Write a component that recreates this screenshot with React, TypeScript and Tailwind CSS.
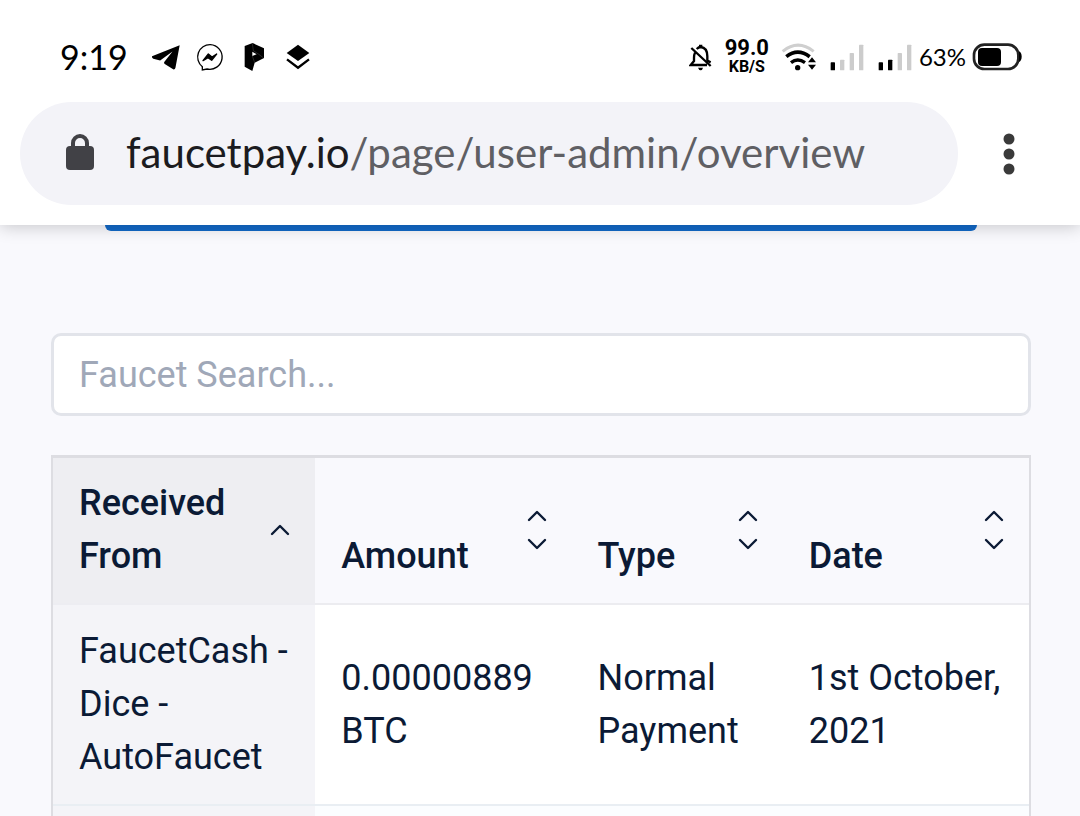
const payments = [
  { from: 'FaucetCash - Dice - AutoFaucet', amount: '0.00000889 BTC', type: 'Normal Payment', date: '1st October, 2021' },
]

// The widths are shares of the row: the table stretches them to fill the page
const columns = [
  { label: 'Received From', width: 'w-[262px]', sorted: true },
  { label: 'Amount', width: 'w-[256px]', sorted: false },
  { label: 'Type', width: 'w-[211px]', sorted: false },
  { label: 'Date', width: 'w-[246px]', sorted: false },
]

function TelegramIcon() {
  return (
    <svg className="h-7 w-7" viewBox="335 54 86 86" aria-hidden="true">
      <path d="M420 61 335 95q-1 5 4 7l21 6 38-28-26 33 1 5 27 17q6 1 7-5z" />
    </svg>
  )
}

function MessengerIcon() {
  return (
    <svg className="h-7 w-7" viewBox="468 54 84 84" aria-hidden="true">
      <path d="M511 59a37 37 0 1 1-10 73l-14 3v-10a37 37 0 0 1 24-66z" fill="none" stroke="black" strokeWidth="4" />
      <path d="m489 107 16-20 11 9 14-9-15 19-11-8z" stroke="black" strokeWidth="4" strokeLinejoin="round" />
    </svg>
  )
}

function PIcon() {
  return (
    <svg className="h-7 w-7" viewBox="601 53 84 84" aria-hidden="true">
      <path fillRule="evenodd" d="m615 62 24-9 34 16v29l-28 14-7 25-23-13zm23 17v13l13-5z" />
      <path d="m638 54 3 22 15 10 16 12M638 92l7 20" fill="none" stroke="#777777" strokeWidth="1" />
    </svg>
  )
}

function LayersIcon() {
  return (
    <svg className="h-7 w-7" viewBox="733 52 84 84" aria-hidden="true">
      <path d="m775 57 34 25-34 24-34-24z" />
      <path d="m742 101 33 25 33-25" fill="none" stroke="black" strokeWidth="7" />
    </svg>
  )
}

function BellOffIcon() {
  return (
    <svg className="h-7 w-6" viewBox="56 54 72 84" aria-hidden="true">
      <g fill="none" stroke="black" strokeWidth="7">
        <path d="m63 69 58 54M74 83q-3 6-3 15v10l-10 12h49" />
        <path d="M79 72q6-6 12-6 20 2 20 28v13l10 5" />
      </g>
      <path d="M86 59h10v8H86zM83 128h15q-2 8-7 8t-8-8z" />
    </svg>
  )
}

function WifiIcon() {
  return (
    <svg className="h-7 w-9" viewBox="334 52 108 84" aria-hidden="true">
      <g fill="none">
        <path d="M339 77q46-37 93 0" stroke="#cfcfcf" strokeWidth="9" />
        <path d="M350 93q34-27 70 0" stroke="black" strokeWidth="11" />
        <path d="M364 111q20-16 42 0" stroke="black" strokeWidth="10" />
      </g>
      <circle cx="384" cy="126" r="8" />
      <path d="m415 110 12-15 12 15zM415 117h24l-12 15z" />
    </svg>
  )
}

function SignalIcon({ level }: { level: number }) {
  const bars = [
    { x: 0, y: 54 },
    { x: 28, y: 46 },
    { x: 57, y: 26 },
    { x: 85, y: 1 },
  ]
  return (
    <svg className="h-7 w-9" viewBox="-5 -4 108 84" aria-hidden="true">
      {bars.map((bar, i) => (
        <rect key={bar.x} x={bar.x} y={bar.y} width="13" height={78 - bar.y} rx="2" fill={i < level ? 'black' : '#cccccc'} />
      ))}
    </svg>
  )
}

function BatteryIcon() {
  return (
    <svg className="h-7 w-[50px]" viewBox="906 51 150 84" aria-hidden="true">
      <rect x="912" y="56" width="133" height="73" rx="31" fill="none" stroke="#222222" strokeWidth="8" />
      <rect x="924" y="66" width="69" height="54" rx="12" />
      <path d="M1047 76q8 4 8 16t-8 16z" />
    </svg>
  )
}

function StatusBar() {
  return (
    <div className="flex h-[102px] items-center justify-between pt-3 pr-[58px] pl-[60px]">
      <div className="flex items-center gap-6">
        <span className="font-[Lato,sans-serif] text-[34px] leading-10">9:19</span>
        <div className="flex items-center gap-4">
          <TelegramIcon />
          <MessengerIcon />
          <PIcon />
          <LayersIcon />
        </div>
      </div>
      <div className="flex items-center gap-3">
        <BellOffIcon />
        <div className="text-center font-bold">
          <div className="text-[22px] leading-5">99.0</div>
          <div className="text-base leading-[18px]">KB/S</div>
        </div>
        <WifiIcon />
        <SignalIcon level={1} />
        <div className="flex items-center gap-1.5">
          <SignalIcon level={2} />
          <span className="font-[Lato,sans-serif] text-2xl">63%</span>
          <BatteryIcon />
        </div>
      </div>
    </div>
  )
}

function AddressBar() {
  return (
    <div className="flex items-center px-5 pb-5">
      <div className="flex h-[103px] min-w-0 flex-1 items-center rounded-full bg-[#f3f3f8] pb-1 pl-[46px]">
        <svg className="h-9 w-7 shrink-0" viewBox="0 0 28 36" aria-hidden="true">
          <rect y="12" width="28" height="24" rx="4" fill="#414146" />
          <path d="M7 14V9a7 7 0 0 1 14 0v5" fill="none" stroke="#414146" strokeWidth="4" />
        </svg>
        <a href="#" className="ml-8 truncate font-[Lato,sans-serif] text-[42px] leading-[60px] text-[#5f5f64]">
          <span className="text-[#1b1b20]">faucetpay.io</span>/page/user-admin/overview
        </a>
      </div>
      <button type="button" aria-label="Menu" className="flex w-[102px] justify-center">
        <svg className="h-[42px] w-3" viewBox="0 0 12 42" fill="#3a3a3a" aria-hidden="true">
          <circle cx="6" cy="6" r="5.5" />
          <circle cx="6" cy="21" r="5.5" />
          <circle cx="6" cy="36" r="5.5" />
        </svg>
      </button>
    </div>
  )
}

function SortIcon({ sorted }: { sorted: boolean }) {
  return (
    <svg className="h-10 w-5 shrink-0 self-center" viewBox="0 0 20 40" fill="none" stroke="currentColor" strokeWidth="2.4" strokeLinecap="round" strokeLinejoin="round" aria-hidden="true">
      {sorted ? (
        <path d="m2 24 8-8 8 8" />
      ) : (
        <>
          <path d="m2 10 8-8 8 8" />
          <path d="m2 30 8 8 8-8" />
        </>
      )}
    </svg>
  )
}

function PaymentsTable() {
  return (
    <div className="border-x-2 border-t-3 border-[#dddde2]">
      <table className="w-full table-fixed border-collapse text-left text-[36px] leading-[53px]">
        <thead>
          <tr className="bg-[#f9f9fd]">
            {columns.map((column) => (
              <th
                key={column.label}
                className={`${column.width} border-b-2 pt-[19px] pr-[25px] pb-5 pl-[26px] font-medium ${column.sorted ? 'border-[#ededf2] bg-[#eeeef2]' : 'border-[#ececf0]'}`}
              >
                <button type="button" className="flex min-h-[106px] w-full items-end justify-between text-left">
                  {column.label}
                  <SortIcon sorted={column.sorted} />
                </button>
              </th>
            ))}
          </tr>
        </thead>
        <tbody>
          {payments.map((payment) => (
            <tr key={payment.from} className="border-b-2 border-[#e9eef3] bg-white">
              <td className="bg-[#f4f4f8] py-5 pr-5 pl-[26px]">{payment.from}</td>
              <td className="py-5 pr-5 pl-[26px]">{payment.amount}</td>
              <td className="py-5 pr-5 pl-[26px]">{payment.type}</td>
              <td className="py-5 pr-5 pl-[26px]">{payment.date}</td>
            </tr>
          ))}
          <tr className="h-[200px] bg-[#fbfdff]">
            <td className="bg-[#f4f4f8]" />
            <td />
            <td />
            <td />
          </tr>
        </tbody>
      </table>
    </div>
  )
}

export default function App() {
  return (
    <div className="flex h-screen flex-col bg-[#f9f9fd] font-[Roboto,sans-serif] text-[#0b1a35]">
      <header className="relative z-10 shrink-0 bg-white text-black shadow-[0_2px_16px_rgba(0,0,0,0.2)]">
        <StatusBar />
        <AddressBar />
      </header>
      <main className="min-h-0 flex-1 overflow-hidden pr-[49px] pl-[51px]">
        <div className="mx-[54px] h-1.5 rounded-b-lg bg-[#1269c8]" />
        <input
          type="text"
          aria-label="Faucet Search"
          placeholder="Faucet Search..."
          className="mt-[102px] mb-[39px] block h-[83px] w-full rounded-[10px] border-3 border-[#e2e4ea] bg-white px-[25px] text-[36px] placeholder:text-[#a0a8b8]"
        />
        <PaymentsTable />
      </main>
    </div>
  )
}
